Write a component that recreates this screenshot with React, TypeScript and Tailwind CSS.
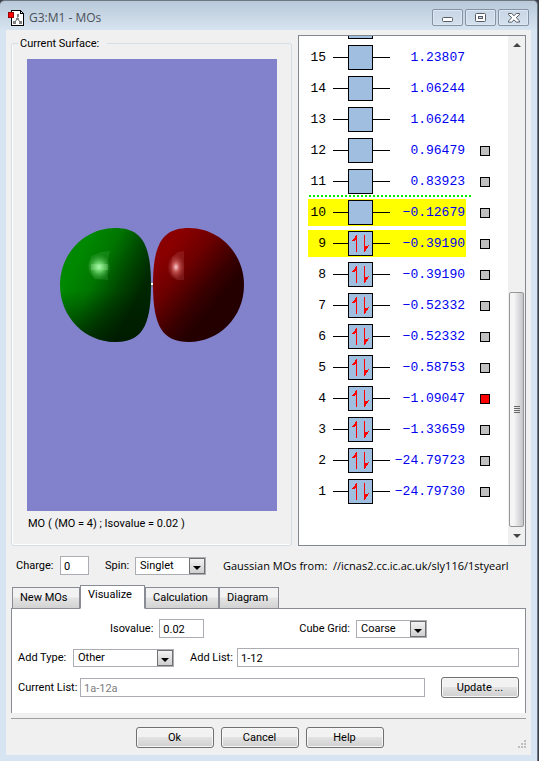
import { useState } from "react";
import type { ReactNode } from "react";

type Orbital = {
  index: number;
  energy: string;
  occupied?: boolean;
  highlighted?: boolean;
  marker?: "gray" | "red";
};

const ORBITALS: Orbital[] = [
  { index: 15, energy: "1.23807" },
  { index: 14, energy: "1.06244" },
  { index: 13, energy: "1.06244" },
  { index: 12, energy: "0.96479", marker: "gray" },
  { index: 11, energy: "0.83923", marker: "gray" },
  { index: 10, energy: "−0.12679", highlighted: true, marker: "gray" },
  { index: 9, energy: "−0.39190", occupied: true, highlighted: true, marker: "gray" },
  { index: 8, energy: "−0.39190", occupied: true, marker: "gray" },
  { index: 7, energy: "−0.52332", occupied: true, marker: "gray" },
  { index: 6, energy: "−0.52332", occupied: true, marker: "gray" },
  { index: 5, energy: "−0.58753", occupied: true, marker: "gray" },
  { index: 4, energy: "−1.09047", occupied: true, marker: "red" },
  { index: 3, energy: "−1.33659", occupied: true, marker: "gray" },
  { index: 2, energy: "−24.79723", occupied: true, marker: "gray" },
  { index: 1, energy: "−24.79730", occupied: true, marker: "gray" },
];

const TABS = [
  { name: "New MOs", width: "w-[68px]" },
  { name: "Visualize", width: "w-[65px]" },
  { name: "Calculation", width: "w-[74px]" },
  { name: "Diagram", width: "w-[60px]" },
];

function AppIcon() {
  return (
    <svg width="17" height="18" viewBox="0 0 17 18" shapeRendering="crispEdges" aria-hidden="true">
      <path d="M3.5 1.5h9l3 3v12h-12z" fill="#fff" stroke="#000" />
      <path d="M12.5 1.5v3h3" fill="none" stroke="#000" />
      <path d="M9.5 6v4M9.5 10l-3 3M9.5 10l3 3" stroke="#aaa" fill="none" />
      <path d="M9 5h2v3H9zM8 9h3v2H8zM5 12h3v3H5zM11 12h3v3h-3z" fill="#808080" />
      <rect x="0.5" y="3.5" width="5" height="5" fill="#f00" stroke="#900" />
    </svg>
  );
}

function CaptionButton({ label, children }: { label: string; children: ReactNode }) {
  return (
    <button
      aria-label={label}
      className="flex h-[17px] w-[31px] items-center justify-center rounded-[2px] border border-[#8592a6] bg-linear-to-b from-[#c8d6e5] to-[#d3e0ed] shadow-[inset_0_0_0_1px_#dce7f1]"
    >
      {children}
    </button>
  );
}

function TitleBar() {
  return (
    <header className="flex h-[29px] items-center pt-1 pr-[2px] pl-[2px]">
      <AppIcon />
      <h1 className="ml-1 flex-1 font-['Open_Sans',sans-serif] text-[12px] leading-4 text-[#4b5057]">G3:M1 - MOs</h1>
      <div className="flex gap-[2px]">
        <CaptionButton label="Minimize">
          <svg width="12" height="12" viewBox="0 0 12 12">
            <rect x="0.5" y="5.5" width="10" height="4" rx="1" fill="#fff" stroke="#565b66" />
          </svg>
        </CaptionButton>
        <CaptionButton label="Maximize">
          <svg width="11" height="10" viewBox="0 0 11 10">
            <rect x="0.5" y="0.5" width="10" height="8" rx="1" fill="#fff" stroke="#565b66" />
            <rect x="3.5" y="3.5" width="4" height="2" fill="#cbd8e6" stroke="#565b66" />
          </svg>
        </CaptionButton>
        <CaptionButton label="Close">
          <svg width="12" height="10" viewBox="0 0 12 10">
            <path
              d="M.5.5h3.2L6 2.8 8.3.5h3.2v1.2L8.2 4.7l3.3 3.2v1.2H8.3L6 6.8 3.7 9.1H.5V7.9l3.3-3.2L.5 1.7z"
              fill="#fff"
              stroke="#565b66"
            />
          </svg>
        </CaptionButton>
      </div>
    </header>
  );
}

function SurfaceView() {
  return (
    <svg
      className="h-[452px] w-full bg-[#8281cb]"
      viewBox="0 0 250 452"
      preserveAspectRatio="xMidYMid meet"
      role="img"
      aria-label="Molecular orbital surface"
    >
      <defs>
        <linearGradient id="green" gradientUnits="userSpaceOnUse" x1="52" y1="196" x2="116" y2="230">
          <stop offset="0" stopColor="#008900" />
          <stop offset="0.35" stopColor="#007600" />
          <stop offset="0.7" stopColor="#004600" />
          <stop offset="1" stopColor="#002600" />
        </linearGradient>
        <linearGradient id="red" gradientUnits="userSpaceOnUse" x1="140" y1="192" x2="194" y2="239">
          <stop offset="0" stopColor="#8a0000" />
          <stop offset="0.35" stopColor="#6d0000" />
          <stop offset="0.75" stopColor="#3a0000" />
          <stop offset="1" stopColor="#240000" />
        </linearGradient>
        <linearGradient id="base" x1="0" y1="0" x2="0" y2="1">
          <stop offset="0.55" stopColor="#001400" stopOpacity="0" />
          <stop offset="1" stopColor="#001400" stopOpacity="0.6" />
        </linearGradient>
        <radialGradient id="greenGlow">
          <stop offset="0" stopColor="#a8ffa8" />
          <stop offset="0.4" stopColor="#6fd86f" stopOpacity="0.8" />
          <stop offset="1" stopColor="#3ca03c" stopOpacity="0" />
        </radialGradient>
        <radialGradient id="redGlow">
          <stop offset="0" stopColor="#ffd2d2" />
          <stop offset="0.4" stopColor="#d06060" stopOpacity="0.75" />
          <stop offset="1" stopColor="#a03030" stopOpacity="0" />
        </radialGradient>
      </defs>
      <rect x="123" y="224" width="4" height="2" fill="#fff" />
      <rect x="123" y="226" width="4" height="2" fill="#777" />
      <path d="M88 169C114 169 124 184 124 226C124 268 114 283 88 283C58 283 33 258 33 226C33 194 58 169 88 169z" fill="url(#green)" />
      <path d="M88 169C114 169 124 184 124 226C124 268 114 283 88 283C58 283 33 258 33 226C33 194 58 169 88 169z" fill="url(#base)" />
      <path d="M162 169C136 169 126 184 126 226C126 268 136 283 162 283C192 283 217 258 217 226C217 194 192 169 162 169z" fill="url(#red)" />
      <path d="M64 197l10-4 9-1-3 14 1 15-14-1-5-13z" fill="#5cc05c" opacity="0.2" />
      <ellipse cx="72" cy="208" rx="12" ry="13" fill="url(#greenGlow)" />
      <path d="M64 206h17M64 208h17M64 210h17" stroke="#b8ffb8" strokeWidth="1" opacity="0.45" />
      <path d="M145 198l6-5 6-1v29h-7l-5-5z" fill="#d07070" opacity="0.2" />
      <ellipse cx="149" cy="208" rx="9" ry="13" fill="url(#redGlow)" />
    </svg>
  );
}

function CurrentSurface() {
  return (
    <fieldset className="h-[511px] min-w-0 flex-1 rounded-[3px] border border-[#d3dee6] pr-[14px] pl-[15px] shadow-[inset_1px_-1px_0_#fff]">
      <legend className="-ml-[9px] h-4 pt-px pr-2 pl-[2px] leading-4">Current Surface:</legend>
      <div className="pt-2">
        <SurfaceView />
        <p className="mt-[5px] pl-[1px] leading-4">MO ( (MO = 4) ; Isovalue = 0.02 )</p>
      </div>
    </fieldset>
  );
}

function ElectronPair() {
  return (
    <svg width="17" height="17" viewBox="0 0 17 17" shapeRendering="crispEdges" aria-hidden="true">
      <path d="M4 0h1v17H4zM3 1h1v4H3zM2 3h1v3H2zM1 4h1v2H1zM0 5h1v1H0z" fill="#f00" />
      <path d="M12 0h1v17h-1zM13 11h1v5h-1zM14 11h1v3h-1zM15 11h1v2h-1zM16 10h1v1h-1z" fill="#f00" />
    </svg>
  );
}

function OrbitalRow({ orbital }: { orbital: Orbital }) {
  const { index, energy, occupied, highlighted, marker } = orbital;
  return (
    <li
      className={`relative flex h-[31px] shrink-0 items-center pl-[9px] ${
        index === 10
          ? "before:absolute before:top-[-2px] before:left-[10px] before:h-[2px] before:w-[162px] before:bg-[repeating-linear-gradient(90deg,#00f000_0_2px,transparent_2px_4px)]"
          : ""
      }`}
    >
      <div className={`flex h-[27px] w-[158px] items-center ${highlighted ? "bg-[#ffff00]" : ""}`}>
        <span className="w-[18px] text-right">{index}</span>
        <span className="ml-[7px] h-px w-[15px] bg-black" />
        <span className="flex h-[25px] w-[25px] shrink-0 items-center justify-center border border-black bg-[#a0bedf]">
          {occupied && <ElectronPair />}
        </span>
        <span className="h-px w-[17px] shrink-0 bg-black" />
        <span className="flex w-[75px] justify-end whitespace-nowrap text-[#0000f0]">{energy}</span>
      </div>
      {marker && (
        <button
          aria-label={`Show surface for orbital ${index}`}
          className={`ml-[14px] h-[10px] w-[10px] border border-black ${marker === "red" ? "bg-[#ff0000]" : "bg-[#c0c0c0]"}`}
        />
      )}
    </li>
  );
}

function ScrollBar() {
  return (
    <div className="flex w-[17px] flex-col items-center bg-[#f0f0f0]">
      <button aria-label="Scroll up" className="flex h-[17px] w-full items-center justify-center">
        <svg width="8" height="4" viewBox="0 0 8 4"><path d="M4 0l4 4H0z" fill="#444" /></svg>
      </button>
      <div className="flex-1" />
      <div className="flex h-[235px] w-[15px] flex-col items-center justify-center gap-[1px] rounded-[2px] border border-[#979797] bg-linear-to-r from-[#f5f5f5] from-30% to-[#c6c6ca]">
        <span className="h-px w-[6px] bg-[#666]" />
        <span className="h-px w-[6px] bg-[#666]" />
        <span className="h-px w-[6px] bg-[#666]" />
        <span className="h-px w-[6px] bg-[#666]" />
      </div>
      <button aria-label="Scroll down" className="flex h-[18px] w-full items-center justify-center">
        <svg width="8" height="4" viewBox="0 0 8 4"><path d="M4 4l4-4H0z" fill="#444" /></svg>
      </button>
    </div>
  );
}

function OrbitalPanel() {
  return (
    <section aria-label="Orbital energies" className="flex h-[511px] w-[228px] shrink-0 border border-[#828790] bg-white">
      <div className="flex flex-1 flex-col font-['Liberation_Mono',monospace] text-[13px] leading-4">
        {/* Lower edge of the next orbital, scrolled out of view above */}
        <div className="ml-[49px] h-[3px] w-[25px] border border-t-0 border-black bg-[#a0bedf]" />
        <ol className="mt-[3px]">
          {ORBITALS.map((orbital) => (
            <OrbitalRow key={orbital.index} orbital={orbital} />
          ))}
        </ol>
      </div>
      <ScrollBar />
    </section>
  );
}

function TextField({ id, value, width, disabled }: { id: string; value: string; width: string; disabled?: boolean }) {
  return (
    <input
      id={id}
      type="text"
      defaultValue={value}
      disabled={disabled}
      className={`h-[19px] min-w-0 border border-[#abadb3] bg-white px-[3px] pt-px leading-4 disabled:text-[#7d7d7d] ${width}`}
    />
  );
}

function SelectField({ id, value, width }: { id: string; value: string; width: string }) {
  return (
    <span className={`relative flex h-[18px] shrink-0 ${width}`}>
      <select id={id} defaultValue={value} className="h-full w-full appearance-none border border-[#abadb3] bg-white pr-4 pl-1 leading-4">
        <option>{value}</option>
      </select>
      <span className="pointer-events-none absolute top-px right-px flex h-4 w-4 items-center justify-center border border-[#707070] bg-linear-to-b from-[#f2f2f2] to-[#cfcfcf]">
        <svg width="8" height="4" viewBox="0 0 8 4" className="mt-1"><path d="M4 4l4-4H0z" /></svg>
      </span>
    </span>
  );
}

function PushButton({ children }: { children: ReactNode }) {
  return (
    <button className="h-[21px] w-[78px] shrink-0 rounded-[3px] border border-[#707070] bg-linear-to-b from-[#f2f2f2] from-45% via-[#e2e2e2] via-50% to-[#cfcfcf] leading-4 shadow-[inset_0_0_0_1px_#f8f8f8]">
      {children}
    </button>
  );
}

function Tabs() {
  const [active, setActive] = useState("Visualize");
  return (
    <div role="tablist" className="flex h-6 items-end pl-[1px]">
      {TABS.map(({ name, width }) => (
        <button
          key={name}
          role="tab"
          aria-selected={name === active}
          onClick={() => setActive(name)}
          className={`border border-[#898c95] pl-[7px] text-left leading-4 ${width} ${
            name === active
              ? "relative z-10 h-6 border-b-white bg-white pb-1"
              : "h-[22px] bg-linear-to-b from-[#f2f2f2] from-45% via-[#e4e4e4] via-50% to-[#d2d2d2]"
          }`}
        >
          {name}
        </button>
      ))}
    </div>
  );
}

function VisualizePanel() {
  return (
    <div role="tabpanel" className="-mt-px h-[105px] border border-b-0 border-[#898c95] bg-white pt-[10px]">
      <div className="flex items-center justify-between px-[98px]">
        <div className="flex items-center gap-[6px]">
          <label htmlFor="isovalue">Isovalue:</label>
          <TextField id="isovalue" value="0.02" width="w-[45px]" />
        </div>
        <div className="flex items-center gap-[6px]">
          <label htmlFor="grid">Cube Grid:</label>
          <SelectField id="grid" value="Coarse" width="w-[71px]" />
        </div>
      </div>
      <div className="mt-[10px] flex items-center px-[6px]">
        <label htmlFor="type" className="w-[55px] shrink-0">Add Type:</label>
        <SelectField id="type" value="Other" width="w-[101px]" />
        <label htmlFor="list" className="ml-4 w-[47px] shrink-0">Add List:</label>
        <TextField id="list" value="1-12" width="flex-1" />
      </div>
      <div className="mt-[10px] flex items-center px-[6px]">
        <label htmlFor="current" className="w-[62px] shrink-0">Current List:</label>
        <TextField id="current" value="1a-12a" width="mr-4 flex-1" disabled />
        <PushButton>Update ...</PushButton>
      </div>
    </div>
  );
}

function Grip() {
  return (
    <svg width="8" height="8" viewBox="0 0 8 8" className="self-end" shapeRendering="crispEdges" aria-hidden="true">
      <path d="M6 0h2v2H6zM3 3h2v2H3zM6 3h2v2H6zM0 6h2v2H0zM3 6h2v2H3zM6 6h2v2H6z" fill="#bfbfbf" />
    </svg>
  );
}

export default function App() {
  return (
    <div className="bg-[#3b4048]">
      <div className="mr-px rounded-t-[5px] border-t border-r border-[#6d7782] bg-[#d7e4f1] bg-linear-to-b from-[#b9c9d9] to-[#d7e4f1] to-[30px] px-[6px] pb-[6px] font-['Roboto',sans-serif] text-[11px] leading-4 text-black">
        <TitleBar />
        <main className="bg-[#f0f0f0] px-[5px] pt-[5px] pb-[7px]">
          <div className="flex gap-[6px]">
            <CurrentSurface />
            <OrbitalPanel />
          </div>
          <div className="mt-[10px] flex items-center pr-[6px] pl-[5px]">
            <label htmlFor="charge" className="w-11 shrink-0">Charge:</label>
            <TextField id="charge" value="0" width="w-[29px]" />
            <label htmlFor="spin" className="ml-4 w-[30px] shrink-0">Spin:</label>
            <SelectField id="spin" value="Singlet" width="w-[71px]" />
            <p className="ml-[17px] min-w-0 flex-1 overflow-hidden font-['Open_Sans',sans-serif] whitespace-pre">
              {"Gaussian MOs from:  //icnas2.cc.ic.ac.uk/sly116/1styearl"}
            </p>
          </div>
          <div className="mt-[10px]">
            <Tabs />
            <VisualizePanel />
          </div>
          <footer className="mt-[5px] flex border-t border-[#a0a0a0] pt-2">
            <div className="flex flex-1 justify-center gap-[7px] pr-[10px]">
              <PushButton>Ok</PushButton>
              <PushButton>Cancel</PushButton>
              <PushButton>Help</PushButton>
            </div>
            <Grip />
          </footer>
        </main>
      </div>
    </div>
  );
}
